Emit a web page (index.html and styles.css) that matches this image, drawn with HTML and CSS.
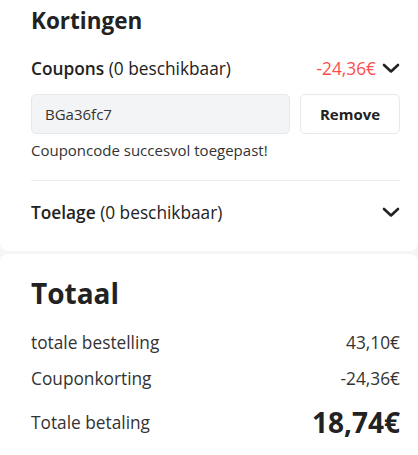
FILE: index.html
```html
<!DOCTYPE html>
<html>
<head>
<meta charset="utf-8">
<link rel="stylesheet" href="styles.css">
</head>
<body>
<section class="card discounts">
  <h2 class="title">Kortingen</h2>
  <div class="row">
    <div class="label"><b>Coupons</b> (0 beschikbaar)</div>
    <div class="right">
      <span class="neg">-24,36€</span>
      <svg class="chev" width="18" height="12" viewBox="0 0 18 12"><path d="M2 3l7 6.5L16 3" fill="none" stroke="#222" stroke-width="2.6" stroke-linecap="round" stroke-linejoin="round"/></svg>
    </div>
  </div>
  <div class="coupon">
    <div class="code">BGa36fc7</div>
    <button class="remove">Remove</button>
  </div>
  <p class="msg">Couponcode succesvol toegepast!</p>
  <div class="divider"></div>
  <div class="row row2">
    <div class="label"><b>Toelage</b> (0 beschikbaar)</div>
    <div class="right">
      <svg class="chev" width="18" height="12" viewBox="0 0 18 12"><path d="M2 3l7 6.5L16 3" fill="none" stroke="#222" stroke-width="2.6" stroke-linecap="round" stroke-linejoin="round"/></svg>
    </div>
  </div>
</section>
<section class="card total">
  <h2 class="title big">Totaal</h2>
  <div class="line"><span>totale bestelling</span><span>43,10€</span></div>
  <div class="line"><span>Couponkorting</span><span>-24,36€</span></div>
  <div class="line sum"><span>Totale betaling</span><span class="amount">18,74€</span></div>
</section>
</body>
</html>
```
FILE: styles.css
```css
* { box-sizing: border-box; }
html, body { margin: 0; padding: 0; }
body {
  background: #f5f5f5;
  font-family: "Open Sans", sans-serif;
  color: #222;
  width: 418px;
  height: 455px;
  overflow: hidden;
}
.card {
  background: #fff;
  padding: 0 18px 0 31px;
}
.discounts {
  border-radius: 0 0 8px 8px;
  height: 251px;
  padding-top: 4px;
}
.total {
  margin-top: 3px;
  border-radius: 8px 8px 0 0;
  height: 201px;
  padding-top: 19px;
}
.title {
  margin: 0;
  font-size: 22.5px;
  font-weight: 700;
  line-height: 33px;
  color: #222;
}
.title.big { font-size: 28px; line-height: 40px; }
.row {
  display: flex;
  justify-content: space-between;
  align-items: center;
  margin-top: 17px;
  height: 28px;
  font-size: 17.3px;
  color: #222;
}
.label b { font-weight: 600; }
.right { display: flex; align-items: center; gap: 6px; }
.neg { color: #ff4d4f; }
.chev { display: block; }
.coupon {
  display: flex;
  gap: 10px;
  margin-top: 12px;
}
.code {
  flex: 1;
  height: 40px;
  background: #f3f4f6;
  border: 1px solid #e6e8ec;
  border-radius: 5px;
  padding: 0 13px;
  display: flex;
  align-items: center;
  font-size: 15px;
  color: #333;
}
.remove {
  width: 100px;
  height: 40px;
  background: #fff;
  border: 1px solid #e6e8ec;
  border-radius: 5px;
  font-family: "Open Sans", sans-serif;
  font-weight: 700;
  font-size: 15px;
  color: #222;
}
.msg {
  margin: 6px 0 0;
  font-size: 15px;
  line-height: 20px;
  color: #333;
}
.divider {
  margin-top: 20px;
  height: 1px;
  background: #eceef1;
}
.row2 { margin-top: 17px; }
.line {
  display: flex;
  justify-content: space-between;
  align-items: center;
  font-size: 17.3px;
  color: #333;
  height: 36px;
}
.total .line:first-of-type { margin-top: 11px; }
.sum { margin-top: 8px; }
.amount { font-size: 28px; font-weight: 700; color: #222; }
```
